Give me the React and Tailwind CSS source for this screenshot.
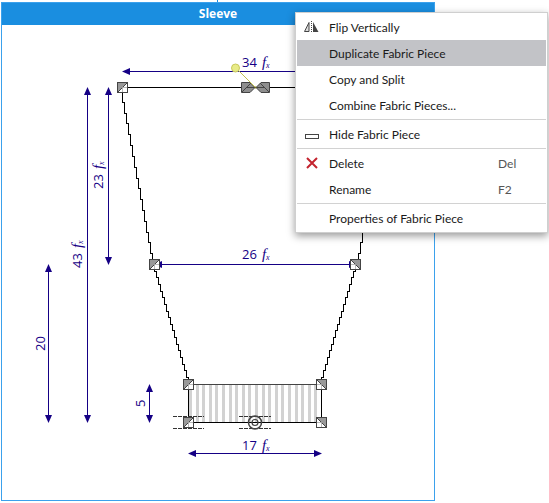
const NAVY = '#150085';

const menuGroups = [
  [
    { label: 'Flip Vertically', icon: FlipIcon },
    { label: 'Duplicate Fabric Piece', active: true },
    { label: 'Copy and Split' },
    { label: 'Combine Fabric Pieces...' }
  ],
  [{ label: 'Hide Fabric Piece', icon: HideIcon }],
  [
    { label: 'Delete', icon: DeleteIcon, shortcut: 'Del' },
    { label: 'Rename', shortcut: 'F2' }
  ],
  [{ label: 'Properties of Fabric Piece' }]
];

const dimensions = [
  { x1: 122, y1: 72, x2: 388, y2: 72, value: '34', formula: true, tx: 242, ty: 67 },
  { x1: 154, y1: 265, x2: 357, y2: 265, value: '26', formula: true, tx: 242, ty: 259 },
  { x1: 188, y1: 454, x2: 322, y2: 454, value: '17', formula: true, tx: 242, ty: 450 },
  { x1: 87, y1: 87, x2: 87, y2: 423, value: '43', formula: true, tx: 82, ty: 268 },
  { x1: 108, y1: 87, x2: 108, y2: 265, value: '23', formula: true, tx: 103, ty: 189 },
  { x1: 48, y1: 264, x2: 48, y2: 423, value: '20', tx: 45, ty: 351 },
  { x1: 149, y1: 384, x2: 149, y2: 423, value: '5', tx: 145, ty: 407 }
];

const handles = [
  { x: 122, y: 87 },
  { x: 154, y: 264 },
  { x: 188, y: 384 },
  { x: 188, y: 422 },
  { x: 355, y: 264, flip: true },
  { x: 321, y: 384, flip: true },
  { x: 321, y: 422, flip: true }
];

const ribs = Array.from({ length: 20 }, (_, i) => Math.round(189 + i * 6.6));

// Slanted edge drawn as two-pixel steps
function stairs(x1, y1, x2, y2) {
  const count = Math.abs(x2 - x1) / 2;
  const rise = (y2 - y1) / count;
  const dir = Math.sign(x2 - x1) * 2;
  let d = `M${x1} ${y1}`;
  for (let i = 1; i <= count; i++) {
    d += `V${Math.round(y1 + rise * i)}h${dir}`;
  }
  return d;
}

function FlipIcon() {
  return (
    <svg width="16" height="16" viewBox="0 0 16 16" aria-hidden="true">
      <path d="M6 3.5V12.5H1.5Z" fill="#ddd" stroke="#444" />
      <path d="M8.5 2V14" stroke="#444" strokeDasharray="1 1" />
      <path d="M10 3L15.5 13H10Z" fill="#444" />
    </svg>
  );
}

function HideIcon() {
  return (
    <svg width="16" height="16" viewBox="0 0 16 16" aria-hidden="true">
      <rect x="2.5" y="8.5" width="13" height="4" fill="#fff" stroke="#444" />
    </svg>
  );
}

function DeleteIcon() {
  return (
    <svg width="16" height="16" viewBox="0 0 16 16" aria-hidden="true">
      <path d="M4 3L14 13M14 3L4 13" stroke="#c4242f" strokeWidth="2" />
    </svg>
  );
}

function Dimension({ x1, y1, x2, y2, value, formula, tx, ty }) {
  const vertical = x1 === x2;
  const line = vertical
    ? { x1: x1 + 0.5, y1: y1 + 4, x2: x2 + 0.5, y2: y2 - 4 }
    : { x1: x1 + 4, y1: y1 - 0.5, x2: x2 - 4, y2: y2 - 0.5 };
  const heads = vertical
    ? `M${x1 + 0.5} ${y1}l3.5 8h-7zM${x2 + 0.5} ${y2}l3.5 -8h-7z`
    : `M${x1} ${y1 - 0.5}l8 -3.5v7zM${x2} ${y2 - 0.5}l-8 -3.5v7z`;

  return (
    <g fill={NAVY}>
      <line {...line} stroke={NAVY} />
      <path d={heads} />
      <g transform={`translate(${tx} ${ty})${vertical ? ' rotate(-90)' : ''}`}>
        <text className="font-['Open_Sans',sans-serif] text-[13px]">{value}</text>
        {formula && (
          <text x="20" className="font-['Liberation_Serif',serif] text-[15px] italic">
            f
          </text>
        )}
        {formula && (
          <text x="24" y="1" className="font-['Liberation_Serif',serif] text-[8px] italic">
            x
          </text>
        )}
      </g>
    </g>
  );
}

function Handle({ x, y, flip }) {
  return (
    <g transform={`translate(${x + 0.5} ${y + 0.5})${flip ? ' scale(-1 1)' : ''}`} stroke="#444">
      <rect x="-5" y="-5" width="10" height="10" fill="#fff" />
      <path d="M-5 5V-5H5Z" fill="#999" />
      <path d="M0 0V5M0 0H5" stroke="#bbb" />
      <rect x="-5" y="-5" width="10" height="10" fill="none" />
    </g>
  );
}

function PatternCanvas() {
  return (
    <svg viewBox="2 25 432 475" className="block h-auto w-full" role="img" aria-label="Sleeve pattern piece">
      {ribs.map((x) => (
        <rect key={x} x={x} y="385" width="3" height="37" fill="#d2d2d2" />
      ))}
      <g fill="none" stroke="#000" shapeRendering="crispEdges">
        <path d="M122 87.5H388" />
        <path d={stairs(122.5, 91, 154.5, 264)} />
        <path d={stairs(154.5, 264, 188.5, 377)} />
        <path d={stairs(388.5, 91, 356.5, 264)} />
        <path d={stairs(355.5, 264, 321.5, 377)} />
        <path d="M188.5 377V422.5H321.5V377" />
        <path d="M188 384.5H322" stroke="#444" />
        <path d="M173 416.5H204M173 428.5H204M239 416.5H271M239 428.5H271" stroke="#333" strokeDasharray="4 1" />
      </g>

      {dimensions.map((item) => (
        <Dimension key={`${item.value}-${item.x1}`} {...item} />
      ))}
      {handles.map((item) => (
        <Handle key={`${item.x}-${item.y}`} {...item} />
      ))}

      <g fill="none" stroke="#444">
        <circle cx="255" cy="422.5" r="6.5" strokeWidth="1.5" />
        <circle cx="255" cy="422.5" r="3" strokeWidth="1.2" />
      </g>

      <g fill="#8e8e8e" stroke="#444">
        <path d="M241.5 82.5H250L255 87.5L250 92.5H241.5Z" />
        <path d="M269.5 82.5H261L256 87.5L261 92.5H269.5Z" />
        <path d="M242 92L251 83M246.5 87.5H255M269 92L260 83M264.5 87.5H256" fill="none" />
      </g>
      <path d="M239 71L255.5 87.5" stroke="#c0be50" />
      <circle cx="255.5" cy="87.5" r="1" fill="#77751f" />
      <circle cx="235.5" cy="68" r="4" fill="#e8eb87" stroke="#c9c95c" />
    </svg>
  );
}

function MenuItem({ label, icon: Icon, shortcut, active }) {
  return (
    <button
      type="button"
      role="menuitem"
      className={`flex h-[26px] w-full items-center pl-[6px] text-left ${active ? 'bg-[#c2c3c7]' : 'hover:bg-[#c2c3c7]'}`}
    >
      <span className="w-[26px]">{Icon && <Icon />}</span>
      <span className="flex-1 pt-px whitespace-nowrap">{label}</span>
      {shortcut && <span className="w-12 pt-px text-[#555]">{shortcut}</span>}
    </button>
  );
}

function ContextMenu() {
  return (
    <div
      role="menu"
      className="absolute top-3 left-[295px] w-[253px] border border-[#cfcfcf] bg-white p-px font-[Lato,sans-serif] text-[12px] text-[#1a1a1a] shadow-[0_3px_8px_rgba(0,0,0,0.4)]"
    >
      {menuGroups.map((group, index) => (
        <div key={group[0].label}>
          {index > 0 && <hr className="my-px border-t border-[#d2d2d2]" />}
          {group.map((item) => (
            <MenuItem key={item.label} {...item} />
          ))}
        </div>
      ))}
    </div>
  );
}

export default function App() {
  return (
    <main className="relative overflow-hidden bg-white pb-[2px]">
      <div className="flex h-[2px] justify-center pr-[114px]">
        <span className="w-px bg-[#1a8ee0]" />
      </div>
      <section className="mr-[114px] ml-px border border-[#3ba1ec] bg-white">
        <h1 className="bg-[#1a8ee0] text-center font-['Open_Sans',sans-serif] text-[12px] leading-[22px] font-bold text-white">
          Sleeve
        </h1>
        <PatternCanvas />
      </section>
      <ContextMenu />
    </main>
  );
}
